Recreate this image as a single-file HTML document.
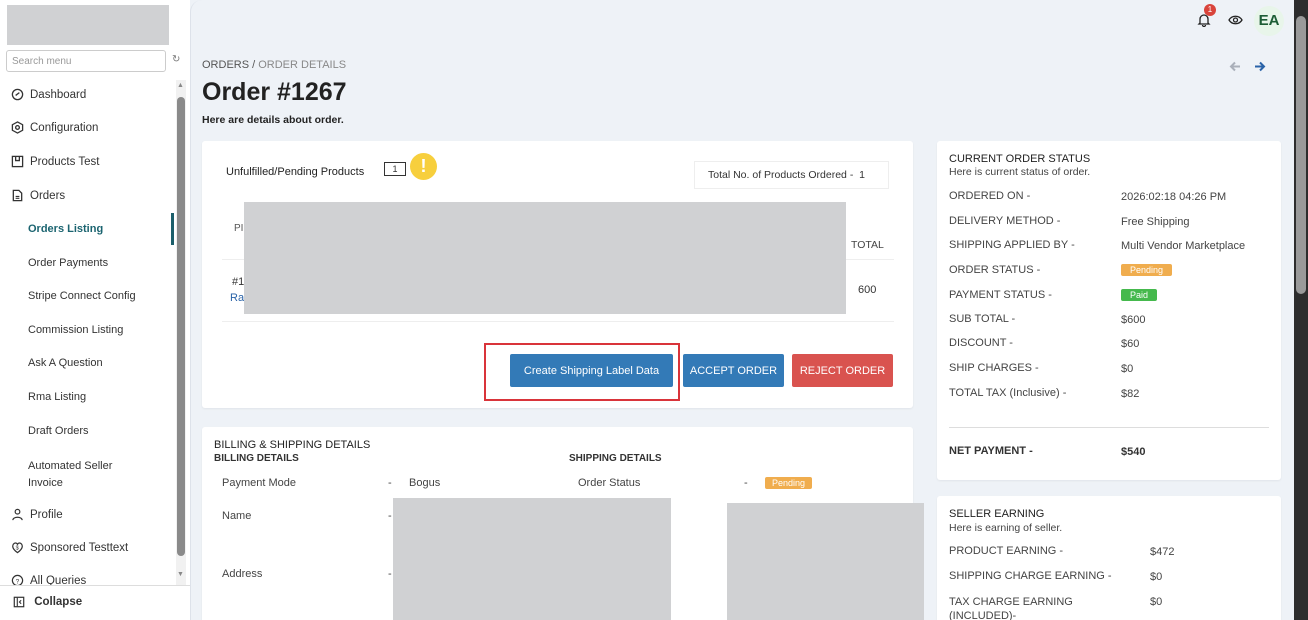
<!DOCTYPE html>
<html><head><meta charset="utf-8"><style>
*{box-sizing:border-box;margin:0;padding:0}
html,body{width:1308px;height:620px;overflow:hidden}
body{background:#eef2f7;font-family:"Liberation Sans",sans-serif;color:#333;position:relative}
.abs{position:absolute}
#side{position:absolute;left:0;top:0;width:190px;height:620px;background:#fff}
.mi{position:absolute;left:11px;font-size:11.5px;color:#333;display:flex;align-items:center;gap:6px}
.si{position:absolute;left:28px;font-size:11px;color:#333}
.card{position:absolute;background:#fff;border-radius:3px;box-shadow:0 1px 2px rgba(0,0,0,.06)}
.gray{position:absolute;background:#d0d1d3}
.r{position:absolute;font-size:11px;color:#444}
.btn{position:absolute;color:#fff;font-size:11px;display:flex;align-items:center;justify-content:center;border-radius:2px;height:33px;top:354px}
.badge{position:absolute;font-size:9px;color:#fff;padding:1px 6px;border-radius:2px}
</style></head><body>
<div id="side">
 <div class="gray" style="left:7px;top:5px;width:162px;height:40px"></div>
 <div class="abs" style="left:6px;top:50px;width:160px;height:22px;border:1px solid #ccc;border-radius:3px;font-size:10px;color:#999;padding:5px 5px">Search menu</div>
 <div class="abs" style="left:172px;top:54px;font-size:10px;color:#777">↻</div>
 <div class="mi" style="top:88px"><svg width="13" height="13" viewBox="0 0 14 14"><circle cx="7" cy="7" r="5.5" fill="none" stroke="#333" stroke-width="1.4"/><path d="M5 8l4-3" stroke="#333" stroke-width="1.4"/></svg>Dashboard</div>
 <div class="mi" style="top:121px"><svg width="13" height="13" viewBox="0 0 14 14"><path d="M7 1l5.5 3v6L7 13 1.5 10V4z" fill="none" stroke="#333" stroke-width="1.4"/><circle cx="7" cy="7" r="2" fill="none" stroke="#333" stroke-width="1.4"/></svg>Configuration</div>
 <div class="mi" style="top:155px"><svg width="13" height="13" viewBox="0 0 14 14"><rect x="1.5" y="1.5" width="11" height="11" fill="none" stroke="#333" stroke-width="1.4"/><path d="M5 2v4h4V2" fill="none" stroke="#333" stroke-width="1.4"/></svg>Products Test</div>
 <div class="mi" style="top:189px"><svg width="13" height="13" viewBox="0 0 14 14"><path d="M2.5 1.5h6l3 3v8h-9z" fill="none" stroke="#333" stroke-width="1.4"/><path d="M5 8h4M5 10h4" stroke="#333" stroke-width="1.2"/></svg>Orders</div>
 <div class="si" style="top:223px;color:#1b6470;font-weight:bold">Orders Listing</div>
 <div class="abs" style="left:171px;top:213px;width:3px;height:32px;background:#1b5e6a"></div>
 <div class="si" style="top:257px">Order Payments</div>
 <div class="si" style="top:290px">Stripe Connect Config</div>
 <div class="si" style="top:324px">Commission Listing</div>
 <div class="si" style="top:357px">Ask A Question</div>
 <div class="si" style="top:391px">Rma Listing</div>
 <div class="si" style="top:425px">Draft Orders</div>
 <div class="si" style="top:458px;line-height:17px">Automated Seller<br>Invoice</div>
 <div class="mi" style="top:508px"><svg width="13" height="13" viewBox="0 0 14 14"><circle cx="7" cy="4" r="2.5" fill="none" stroke="#333" stroke-width="1.3"/><path d="M2 13c0-4 10-4 10 0" fill="none" stroke="#333" stroke-width="1.3"/></svg>Profile</div>
 <div class="mi" style="top:541px"><svg width="13" height="13" viewBox="0 0 14 14"><path d="M7 12.5C2 9 1 6 2.5 3.5 4 1.5 6 2 7 3.5 8 2 10 1.5 11.5 3.5 13 6 12 9 7 12.5z" fill="none" stroke="#333" stroke-width="1.3"/><text x="5" y="9" font-size="6" fill="#333">$</text></svg>Sponsored Testtext</div>
 <div class="mi" style="top:574px"><svg width="13" height="13" viewBox="0 0 14 14"><circle cx="7" cy="7" r="5.5" fill="none" stroke="#333" stroke-width="1.3"/><text x="5" y="10" font-size="7" fill="#333">?</text></svg>All Queries</div>
 <div class="abs" style="left:176px;top:80px;width:10px;height:505px;background:#f1f1f1"></div>
 <div class="abs" style="left:177px;top:97px;width:8px;height:459px;background:#8a8a8a;border-radius:4px"></div>
 <div class="abs" style="left:177px;top:82px;font-size:7px;color:#888">▲</div>
 <div class="abs" style="left:177px;top:571px;font-size:7px;color:#888">▼</div>
 <div class="abs" style="left:0;top:585px;width:190px;height:35px;background:#fff;border-top:1px solid #ddd"></div>
 <div class="mi" style="top:596px;left:13px;font-weight:bold"><svg width="12" height="12" viewBox="0 0 14 14"><rect x="1.5" y="1.5" width="11" height="11" fill="none" stroke="#333" stroke-width="1.4"/><path d="M5 2v10M9.5 5L7.5 7l2 2" fill="none" stroke="#333" stroke-width="1.3"/></svg>&nbsp;Collapse</div>
</div>
<div class="abs" style="left:190px;top:0;width:12px;height:620px;border-left:1px solid #dde2ea;border-top-left-radius:12px;background:#eef2f7"></div>
<!-- top bar -->
<div class="abs" style="left:1197px;top:12px"><svg width="14" height="15" viewBox="0 0 14 15"><path d="M3 11V7a4 4 0 018 0v4l1 1H2z M5.5 13a1.5 1.5 0 003 0" fill="none" stroke="#222" stroke-width="1.3"/></svg></div>
<div class="abs" style="left:1204px;top:4px;width:12px;height:12px;border-radius:6px;background:#d9443b;color:#fff;font-size:8px;text-align:center;line-height:12px">1</div>
<div class="abs" style="left:1228px;top:13px"><svg width="15" height="12" viewBox="0 0 15 12"><path d="M1 6c3-5 10-5 13 0-3 5-10 5-13 0z" fill="none" stroke="#222" stroke-width="1.3"/><circle cx="7.5" cy="6" r="2" fill="none" stroke="#222" stroke-width="1.3"/></svg></div>
<div class="abs" style="left:1254px;top:6px;width:30px;height:30px;border-radius:15px;background:#e8f5ea;color:#1d5c35;font-size:15px;font-weight:bold;text-align:center;line-height:30px">EA</div>
<div class="abs" style="left:1229px;top:59px"><svg width="12" height="11" viewBox="0 0 12 11"><path d="M11 5.5H2M6 1.5L2 5.5l4 4" fill="none" stroke="#aab0ba" stroke-width="2"/></svg></div>
<div class="abs" style="left:1254px;top:59px"><svg width="12" height="11" viewBox="0 0 12 11"><path d="M1 5.5h9M6 1.5l4 4-4 4" fill="none" stroke="#2a63a8" stroke-width="2"/></svg></div>
<div class="abs" style="left:1294px;top:0;width:14px;height:620px;background:#2d2d2d"></div>
<div class="abs" style="left:1296px;top:16px;width:10px;height:278px;background:#9a9a9a;border-radius:5px"></div>
<!-- heading -->
<div class="abs" style="left:202px;top:59px;font-size:11px;color:#555">ORDERS / <span style="color:#888">ORDER DETAILS</span></div>
<div class="abs" style="left:202px;top:78px;font-size:25px;font-weight:bold;color:#222">Order #1267</div>
<div class="abs" style="left:202px;top:114px;font-size:10.5px;font-weight:bold;color:#222">Here are details about order.</div>
<!-- card1 -->
<div class="card" style="left:202px;top:141px;width:711px;height:267px"></div>
<div class="abs" style="left:226px;top:166px;font-size:11px;color:#222">Unfulfilled/Pending Products</div>
<div class="abs" style="left:384px;top:162px;width:22px;height:14px;border:1px solid #333;font-size:9px;text-align:center;line-height:12px">1</div>
<div class="abs" style="left:410px;top:153px;width:27px;height:27px;border-radius:14px;background:#f7cf3d;color:#fff;font-weight:bold;font-size:18px;text-align:center;line-height:27px">!</div>
<div class="abs" style="left:694px;top:161px;width:195px;height:28px;border:1px solid #eee;font-size:10.5px;color:#333;padding:7px 13px">Total No. of Products Ordered - &nbsp;1</div>
<div class="abs" style="left:234px;top:223px;font-size:10px;color:#555">PI</div>
<div class="abs" style="left:851px;top:239px;font-size:10.5px;color:#444">TOTAL</div>
<div class="abs" style="left:222px;top:259px;width:672px;height:1px;background:#eee"></div>
<div class="abs" style="left:232px;top:276px;font-size:11px;color:#333">#1</div>
<div class="abs" style="left:230px;top:292px;font-size:11px;color:#2a63a8">Ra</div>
<div class="abs" style="left:858px;top:284px;font-size:11px;color:#333">600</div>
<div class="abs" style="left:222px;top:321px;width:672px;height:1px;background:#eee"></div>
<div class="gray" style="left:244px;top:202px;width:602px;height:112px"></div>
<div class="abs" style="left:484px;top:343px;width:196px;height:58px;border:2px solid #d9343a"></div>
<div class="btn" style="left:510px;width:163px;background:#337ab7">Create Shipping Label Data</div>
<div class="btn" style="left:683px;width:101px;background:#337ab7">ACCEPT ORDER</div>
<div class="btn" style="left:792px;width:101px;background:#d9534f">REJECT ORDER</div>
<!-- card2 -->
<div class="card" style="left:202px;top:427px;width:711px;height:200px"></div>
<div class="abs" style="left:214px;top:439px;font-size:11px;color:#222">BILLING &amp; SHIPPING DETAILS</div>
<div class="abs" style="left:214px;top:453px;font-size:10px;font-weight:bold;color:#333">BILLING DETAILS</div>
<div class="abs" style="left:569px;top:453px;font-size:10px;font-weight:bold;color:#333">SHIPPING DETAILS</div>
<div class="r" style="left:222px;top:477px">Payment Mode</div>
<div class="r" style="left:388px;top:477px">-</div>
<div class="r" style="left:409px;top:477px">Bogus</div>
<div class="r" style="left:578px;top:477px">Order Status</div>
<div class="r" style="left:744px;top:477px">-</div>
<div class="badge" style="left:765px;top:477px;background:#f0ad4e;padding:1px 7px">Pending</div>
<div class="r" style="left:222px;top:510px">Name</div>
<div class="r" style="left:388px;top:510px">-</div>
<div class="r" style="left:222px;top:568px">Address</div>
<div class="r" style="left:388px;top:568px">-</div>
<div class="gray" style="left:393px;top:498px;width:278px;height:122px"></div>
<div class="gray" style="left:727px;top:503px;width:197px;height:117px"></div>
<!-- right card 1 -->
<div class="card" style="left:937px;top:141px;width:344px;height:339px"></div>
<div class="abs" style="left:949px;top:153px;font-size:11px;color:#222">CURRENT ORDER STATUS</div>
<div class="abs" style="left:949px;top:166px;font-size:10.5px;color:#444">Here is current status of order.</div>
<div class="r" style="left:949px;top:190px">ORDERED ON -</div><div class="r" style="left:1121px;top:191px">2026:02:18 04:26 PM</div>
<div class="r" style="left:949px;top:215px">DELIVERY METHOD -</div><div class="r" style="left:1121px;top:216px">Free Shipping</div>
<div class="r" style="left:949px;top:239px">SHIPPING APPLIED BY -</div><div class="r" style="left:1121px;top:240px">Multi Vendor Marketplace</div>
<div class="r" style="left:949px;top:264px">ORDER STATUS -</div><div class="badge" style="left:1121px;top:264px;background:#f0ad4e;padding:1px 9px">Pending</div>
<div class="r" style="left:949px;top:289px">PAYMENT STATUS -</div><div class="badge" style="left:1121px;top:289px;background:#45b94d;padding:1px 9px">Paid</div>
<div class="r" style="left:949px;top:313px">SUB TOTAL -</div><div class="r" style="left:1121px;top:314px">$600</div>
<div class="r" style="left:949px;top:337px">DISCOUNT -</div><div class="r" style="left:1121px;top:338px">$60</div>
<div class="r" style="left:949px;top:362px">SHIP CHARGES -</div><div class="r" style="left:1121px;top:363px">$0</div>
<div class="r" style="left:949px;top:387px">TOTAL TAX (Inclusive) -</div><div class="r" style="left:1121px;top:388px">$82</div>
<div class="abs" style="left:949px;top:427px;width:320px;height:1px;background:#ddd"></div>
<div class="r" style="left:949px;top:445px;font-weight:bold;color:#333">NET PAYMENT -</div><div class="r" style="left:1121px;top:446px;font-weight:bold;color:#333">$540</div>
<!-- right card 2 -->
<div class="card" style="left:937px;top:496px;width:344px;height:130px"></div>
<div class="abs" style="left:949px;top:508px;font-size:11px;color:#222">SELLER EARNING</div>
<div class="abs" style="left:949px;top:522px;font-size:10.5px;color:#444">Here is earning of seller.</div>
<div class="r" style="left:949px;top:545px">PRODUCT EARNING -</div><div class="r" style="left:1150px;top:546px">$472</div>
<div class="r" style="left:949px;top:570px">SHIPPING CHARGE EARNING -</div><div class="r" style="left:1150px;top:571px">$0</div>
<div class="r" style="left:949px;top:595px;line-height:14px">TAX CHARGE EARNING<br>(INCLUDED)-</div><div class="r" style="left:1150px;top:596px">$0</div>
</body></html>
